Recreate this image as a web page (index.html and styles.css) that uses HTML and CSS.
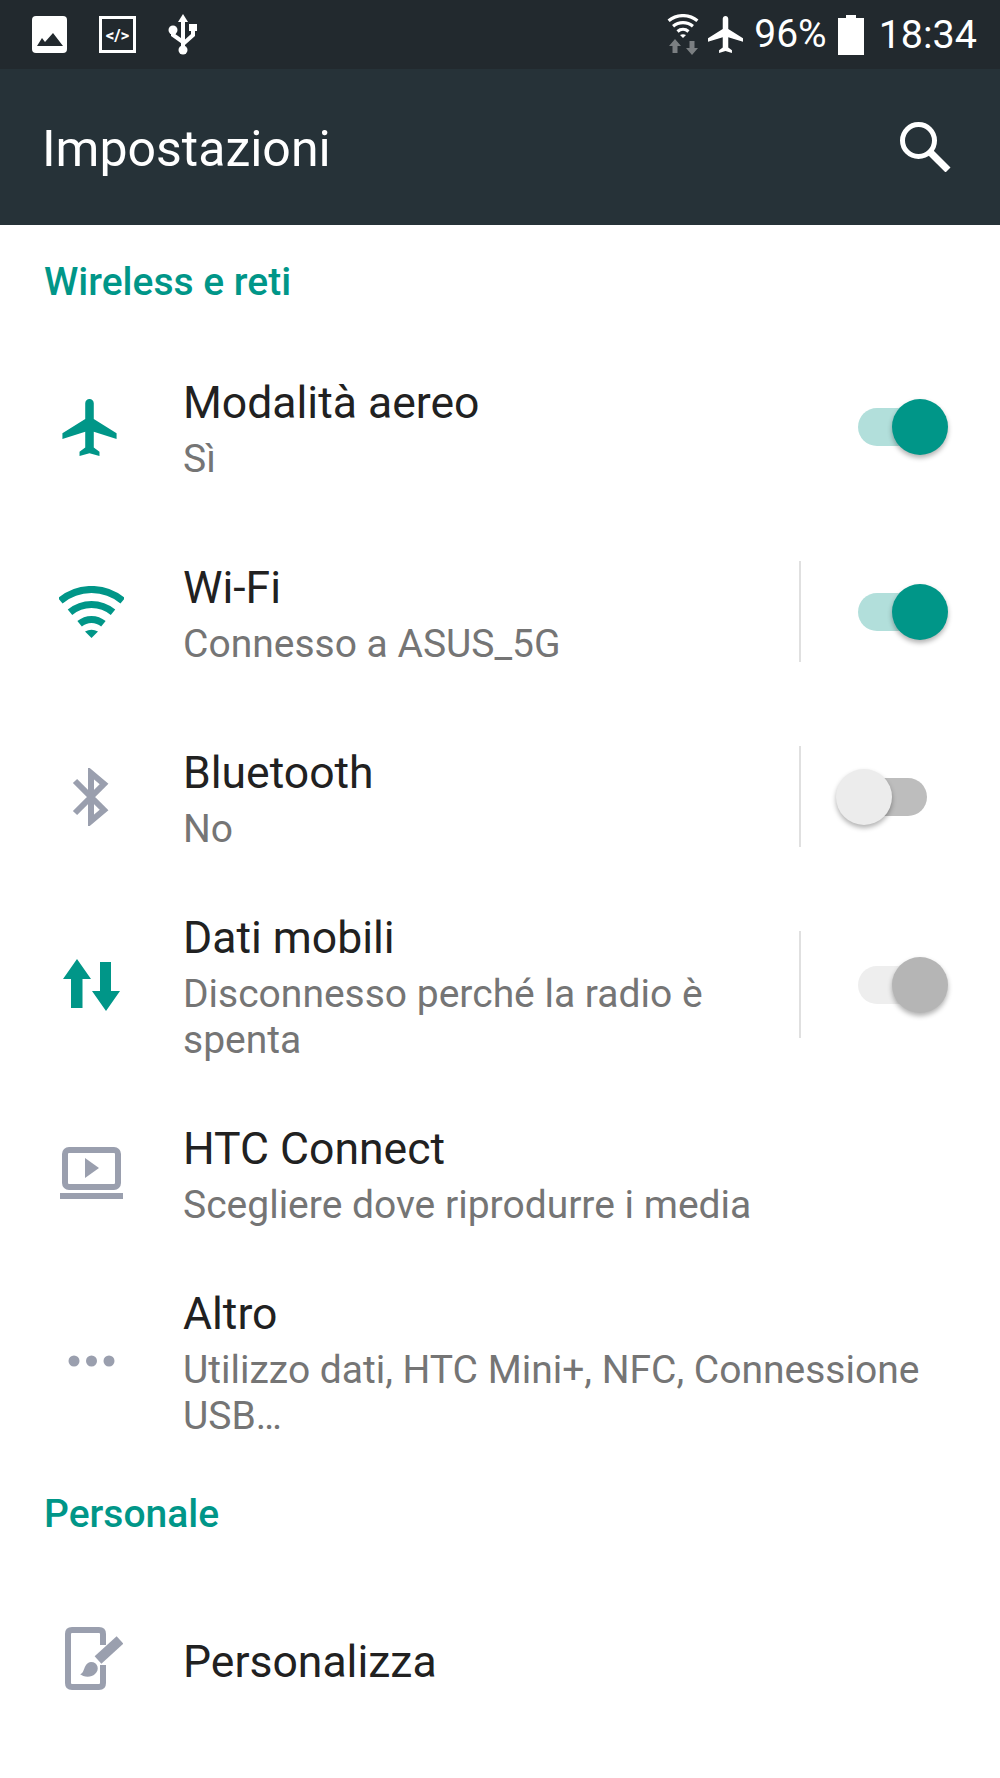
FILE: index.html
```html
<!DOCTYPE html>
<html lang="it">
<head>
    <meta charset="UTF-8">
    <meta name="viewport" content="width=device-width, initial-scale=1.0">
    <title>Impostazioni</title>
    <link rel="stylesheet" href="styles.css">
</head>
<body>
    <svg class="defs" width="0" height="0">
        <symbol id="plane" viewBox="2 2 19 20">
            <path d="M21 16v-2l-8-5V3.5c0-.83-.67-1.5-1.5-1.5S10 2.67 10 3.5V9l-8 5v2l8-2.5V19l-2 1.5V22l3.5-1 3.5 1v-1.5L13 19v-5.5l8 2.5z"/>
        </symbol>
        <symbol id="wifi" viewBox="0 0 65 52">
            <path class="arc" d="M1.3 14.8A48.5 48.5 0 0 1 63.7 14.8M11 26.3A33.5 33.5 0 0 1 54 26.3M20.6 37.8A18.5 18.5 0 0 1 44.4 37.8"/>
            <path d="M32.5 52L26 45.5Q32.5 42 39 45.5z"/>
        </symbol>
    </svg>

    <div class="status-bar">
        <div class="status-left">
            <svg class="ic-white" width="35" height="37" viewBox="0 0 35 37">
                <rect width="35" height="37" rx="4"/>
                <path class="cutout" d="M5 30L10 22L13 26L21 17L31 30z"/>
            </svg>
            <div class="code-icon">&lt;/&gt;</div>
            <svg class="ic-white" width="29" height="41" viewBox="0 0 29 41">
                <path d="M15 0L20 8H17V34H13V8H10z"/>
                <circle cx="15" cy="36" r="4.5"/>
                <circle cx="5" cy="16" r="4.5"/>
                <rect x="21" y="10" width="8" height="7"/>
                <path class="usb-arm" d="M5 18V21L15 28M25 15V21L15 30"/>
            </svg>
        </div>
        <div class="status-right">
            <div class="status-pair">
                <div class="signal">
                    <svg class="ic-white" width="40" height="24"><use href="#wifi"/></svg>
                    <svg class="ic-signal" width="29" height="16" viewBox="0 0 29 16">
                        <path d="M6 0L12 7H8.5V14H3.5V7H0zM23 16L29 9H25.500V2H20.500V9H17z"/>
                    </svg>
                </div>
                <svg class="ic-white" width="35" height="37"><use href="#plane"/></svg>
            </div>
            <span class="status-text">96%</span>
            <svg class="ic-white" width="26" height="40" viewBox="0 0 26 40">
                <path d="M8 0H18V3H26V40H0V3H8z"/>
            </svg>
            <span class="status-text status-time">18:34</span>
        </div>
    </div>

    <div class="toolbar">
        <h1>Impostazioni</h1>
        <svg class="ic-search" width="51" height="50" viewBox="0 0 51 50">
            <circle cx="18.500" cy="18.500" r="16"/>
            <path d="M30 30L48 48"/>
        </svg>
    </div>

    <div class="section-title section-first">Wireless e reti</div>

    <div class="row">
        <div class="row-icon">
            <svg class="ic-teal ic-plane" width="55" height="57"><use href="#plane"/></svg>
        </div>
        <div class="row-text">
            <div class="row-title">Modalità aereo</div>
            <div class="row-sub">Sì</div>
        </div>
        <div class="switch on"><div class="track"></div><div class="thumb"></div></div>
    </div>

    <div class="row">
        <div class="row-icon">
            <svg class="ic-teal" width="65" height="52"><use href="#wifi"/></svg>
        </div>
        <div class="row-text">
            <div class="row-title">Wi-Fi</div>
            <div class="row-sub">Connesso a ASUS_5G</div>
        </div>
        <div class="divider"></div>
        <div class="switch on"><div class="track"></div><div class="thumb"></div></div>
    </div>

    <div class="row">
        <div class="row-icon">
            <svg class="ic-line" width="38" height="58" viewBox="0 0 38 58">
                <path d="M3 13L32 42L19 53V5L32 16L3 45"/>
            </svg>
        </div>
        <div class="row-text">
            <div class="row-title">Bluetooth</div>
            <div class="row-sub">No</div>
        </div>
        <div class="divider"></div>
        <div class="switch off"><div class="track"></div><div class="thumb"></div></div>
    </div>

    <div class="row">
        <div class="row-icon">
            <svg class="ic-teal" width="57" height="52" viewBox="0 0 57 52">
                <path d="M14 0L28 20H19.500V49H8V20H0z"/>
                <path d="M37 3H48V32H57L43 52L29 32H37z"/>
            </svg>
        </div>
        <div class="row-text">
            <div class="row-title">Dati mobili</div>
            <div class="row-sub">Disconnesso perché la radio è spenta</div>
        </div>
        <div class="divider"></div>
        <div class="switch disabled"><div class="track"></div><div class="thumb"></div></div>
    </div>

    <div class="row">
        <div class="row-icon">
            <svg class="ic-grey" width="63" height="52" viewBox="0 0 63 52">
                <rect class="frame" x="5" y="3" width="53" height="37" rx="4"/>
                <path d="M25 11L39 21L25 31z"/>
                <rect x="0" y="46" width="63" height="6"/>
            </svg>
        </div>
        <div class="row-text">
            <div class="row-title">HTC Connect</div>
            <div class="row-sub">Scegliere dove riprodurre i media</div>
        </div>
    </div>

    <div class="row">
        <div class="row-icon">
            <svg class="ic-grey" width="47" height="12" viewBox="0 0 47 12">
                <circle cx="6" cy="6" r="5.500"/>
                <circle cx="23.500" cy="6" r="5.500"/>
                <circle cx="41" cy="6" r="5.500"/>
            </svg>
        </div>
        <div class="row-text">
            <div class="row-title">Altro</div>
            <div class="row-sub">Utilizzo dati, HTC Mini+, NFC, Connessione USB…</div>
        </div>
    </div>

    <div class="section-title">Personale</div>

    <div class="row row-single">
        <div class="row-icon">
            <svg class="ic-grey" width="64" height="63" viewBox="-6 0 64 63">
                <path class="frame" d="M38 18V7Q38 3 34 3H7Q3 3 3 7V56Q3 60 7 60H34Q38 60 38 56V38"/>
                <path class="brush" d="M33 33L55 13"/>
                <path d="M15 47C20 47 18 36 26 35C33 35 35 43 30 47C26 51 18 50 15 47z"/>
            </svg>
        </div>
        <div class="row-text">
            <div class="row-title">Personalizza</div>
        </div>
    </div>
</body>
</html>
```

FILE: styles.css
```css
body {
    font-family: Roboto, "Liberation Sans", sans-serif;
    margin: 0;
    background-color: #fff;
    color: #212121;
}

.defs {
    position: absolute;
}

.status-bar {
    display: flex;
    align-items: center;
    justify-content: space-between;
    height: 69px;
    padding: 0 23px 0 32px;
    background-color: #22292e;
    color: #fff;
}

.status-left {
    display: flex;
    align-items: center;
    gap: 32px;
}

.status-right {
    display: flex;
    align-items: center;
    gap: 11px;
}

.status-pair {
    display: flex;
    align-items: center;
    gap: 5px;
}

.signal {
    display: flex;
    flex-direction: column;
    align-items: center;
    gap: 1px;
}

.status-text {
    font-size: 39px;
    line-height: 69px;
}

.status-time {
    margin-left: 4px;
    font-size: 39.5px;
}

.code-icon {
    display: flex;
    align-items: center;
    justify-content: center;
    box-sizing: border-box;
    width: 37px;
    height: 37px;
    border: 3px solid #fff;
    font-size: 17px;
    font-weight: 700;
}

.arc {
    fill: none;
    stroke: currentColor;
    stroke-width: 7;
}

.ic-white {
    fill: #fff;
    color: #fff;
}

.ic-white .cutout {
    fill: #22292e;
}

.ic-white .usb-arm {
    fill: none;
    stroke: #fff;
    stroke-width: 4;
}

.ic-signal {
    fill: #7b7f82;
}

.toolbar {
    display: flex;
    align-items: center;
    justify-content: space-between;
    box-sizing: border-box;
    height: 156px;
    padding: 0 49px 0 42px;
    background-color: #263238;
    color: #fff;
}

.toolbar h1 {
    margin: 4px 0 0;
    font-size: 50px;
    font-weight: 400;
}

.ic-search {
    fill: none;
    stroke: #fff;
    stroke-width: 5;
}

.ic-search path {
    stroke-width: 7;
}

.section-title {
    display: flex;
    align-items: center;
    box-sizing: border-box;
    height: 112px;
    padding-left: 44px;
    color: #009688;
    font-size: 39px;
    font-weight: 500;
}

.section-first {
    height: 111px;
    padding-top: 3px;
}

.row {
    display: flex;
    align-items: center;
    box-sizing: border-box;
    min-height: 185px;
    padding: 19px 52px 19px 0;
}

.row-single {
    padding-bottom: 21px;
}

.row-icon {
    display: flex;
    justify-content: center;
    flex-shrink: 0;
    box-sizing: border-box;
    width: 183px;
    padding-right: 1px;
    margin-bottom: 3px;
}

.row-single .row-icon {
    margin-bottom: 7px;
}

.ic-plane {
    margin-right: 3px;
}

.row-text {
    flex: 1;
}

.row-title {
    font-size: 44.5px;
    line-height: 56px;
}

.row-sub {
    margin-top: 5px;
    color: #757575;
    font-size: 39px;
    line-height: 46px;
}

.ic-teal {
    fill: #009688;
    color: #009688;
}

.ic-grey {
    fill: #9a9fae;
}

.ic-grey .frame {
    fill: none;
    stroke: #9a9fae;
    stroke-width: 6;
}

.ic-grey .brush {
    fill: none;
    stroke: #9a9fae;
    stroke-width: 10;
}

.ic-line {
    fill: none;
    stroke: #9a9fae;
    stroke-width: 6;
}

.divider {
    align-self: stretch;
    flex-shrink: 0;
    width: 2px;
    margin: 21px 35px 25px 0;
    background-color: #e0e0e0;
}

.switch {
    position: relative;
    flex-shrink: 0;
    width: 112px;
    height: 56px;
    margin-bottom: 4px;
}

.track {
    position: absolute;
    top: 9px;
    left: 22px;
    width: 69px;
    height: 38px;
    border-radius: 19px;
}

.thumb {
    position: absolute;
    top: 0;
    width: 56px;
    height: 56px;
    border-radius: 50%;
    box-shadow: 0 3px 5px rgba(0, 0, 0, 0.3);
}

.switch.on .track {
    background-color: #b2dfdb;
}

.switch.on .thumb {
    right: 0;
    background-color: #009688;
}

.switch.off .track {
    background-color: #bdbdbd;
}

.switch.off .thumb {
    left: 0;
    background-color: #ececec;
}

.switch.disabled .track {
    background-color: #eeeeee;
}

.switch.disabled .thumb {
    right: 0;
    background-color: #b5b5b5;
}
```
